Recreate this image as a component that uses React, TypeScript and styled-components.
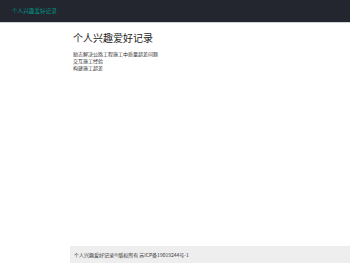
import React from "react";
import styled, { createGlobalStyle } from "styled-components";

const Global = createGlobalStyle`
  html, body { margin: 0; padding: 0; height: 100%; }
  body {
    font-family: "Noto Sans CJK SC", "Liberation Sans", sans-serif;
    background: #fff;
    color: #333;
  }
  #root { min-height: 100vh; }
`;

const Page = styled.div`
  min-height: 100vh;
  display: flex;
  flex-direction: column;
`;

const Header = styled.header`
  height: 22px;
  background: #23262e;
  display: flex;
  align-items: center;
  padding-left: 12px;
  box-shadow: 0 1px 0 #cfd2d6;
`;

const Logo = styled.div`
  color: #009688;
  font-size: 5.6px;
  line-height: 1;
  padding-top: 2px;
`;

const Body = styled.main`
  flex: 1;
  padding: 9px 0 0 73px;
`;

const Title = styled.h1`
  margin: 0 0 5px;
  font-size: 10px;
  font-weight: 400;
  line-height: 14px;
  color: #222;
`;

const LinkList = styled.ul`
  list-style: none;
  margin: 0;
  padding: 0;
`;

const Item = styled.li`
  font-size: 5px;
  line-height: 7px;
`;

const Link = styled.a`
  color: #333;
  text-decoration: none;
`;

const Footer = styled.footer`
  margin-left: 70px;
  height: 17px;
  background: #eee;
  display: flex;
  align-items: center;
  padding-left: 4px;
  font-size: 5px;
  color: #333;
`;

const links = ["励志解决公路工程施工中质量超差问题", "交互施工经验", "构建施工超差"];

export default function App() {
  return (
    <>
      <Global />
      <Page>
        <Header>
          <Logo>个人兴趣爱好记录</Logo>
        </Header>
        <Body>
          <Title>个人兴趣爱好记录</Title>
          <LinkList>
            {links.map((l) => (
              <Item key={l}>
                <Link href="#">{l}</Link>
              </Item>
            ))}
          </LinkList>
        </Body>
        <Footer>个人兴趣爱好记录©版权所有 苏ICP备19019244号-1</Footer>
      </Page>
    </>
  );
}
